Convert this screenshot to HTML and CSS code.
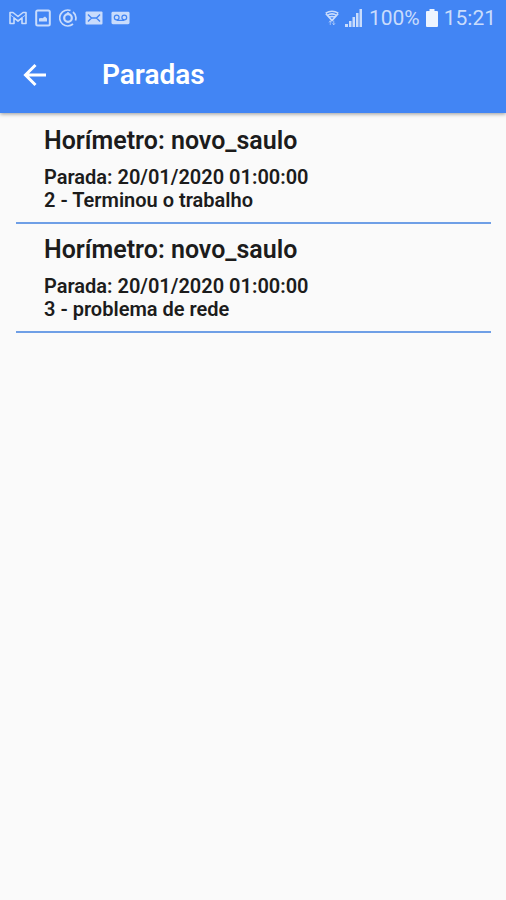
FILE: index.html
```html
<!DOCTYPE html>
<html lang="pt-BR">
<head>
<meta charset="utf-8">
<meta name="viewport" content="width=device-width, initial-scale=1">
<title>Paradas</title>
<link rel="stylesheet" href="styles.css">
</head>
<body>
<header class="header">
  <div class="status">
    <div class="status-group notifications">
      <svg width="18" height="16" viewBox="0 0 18 16" fill="none" stroke="currentColor" stroke-width="1.600" stroke-linejoin="round"><path d="M1 2.500h3l5 4 5-4h3v11h-4V8l-4 3.200L5 8v5.500H1z"/><path d="M1.500 5 9 10.500 16.500 5" stroke-width=".8"/></svg>
      <svg width="16" height="18" viewBox="0 0 16 18"><rect x="1.200" y="1.500" width="13.600" height="15" rx="1.500" fill="none" stroke="currentColor" stroke-width="2"/><path d="M4 12.500V9.500l2-.5 1.500.3L10 7.500l2 2v3z" fill="currentColor"/></svg>
      <svg width="18" height="18" viewBox="0 0 18 18" fill="none" stroke="currentColor"><path d="M11.500 1.500A8 8 0 1 0 14 15M14 3a8 8 0 0 1 2.500 8.500" stroke-width="1.700"/><circle cx="9" cy="9" r="3.800" stroke-width="2.200"/><path d="M9 3v3" stroke-width="1.500"/></svg>
      <svg width="18" height="14" viewBox="0 0 18 14"><rect x=".5" y=".5" width="17" height="13" rx="1" fill="currentColor"/><path d="M3 3.500 6.500 7H11.500L15 3.500M6.500 7 3 10.500M11.500 7 15 10.500" fill="none" stroke="#4285f4" stroke-width="1.400"/></svg>
      <svg width="19" height="14" viewBox="0 0 20 14"><rect x=".5" y=".5" width="19" height="13" rx="1.500" fill="currentColor"/><g fill="none" stroke="#4285f4" stroke-width="1.300"><circle cx="6" cy="6.500" r="2.500"/><circle cx="14" cy="6.500" r="2.500"/><path d="M6 9.500h8"/></g></svg>
    </div>
    <div class="status-group system">
      <svg width="14" height="18" viewBox="0 0 16 18" fill="none" stroke="currentColor" stroke-width="1.800"><path d="M.8 3.500q7.200-4.500 14.400 0M2.800 6q5.200-3.500 10.400 0M4.800 8.500q3.200-2.300 6.400 0M1 4l7 8 7-8"/><path d="M6 12v5M4.500 14 6 12.300 7.500 14M10 12v5M8.500 15 10 16.700 11.500 15" stroke-width="1" opacity=".75"/></svg>
      <svg width="18" height="18" viewBox="0 0 18 18" fill="currentColor"><path d="M0 15h3v3H0zM4 12h2.500v6H4zM7.500 8H10v10H7.500zM11 4h2.500v14H11zM14.500 0H17v18h-2.500z"/></svg>
      <span class="status-text">100%</span>
      <svg class="battery" width="12" height="18" viewBox="0 0 12 18" fill="currentColor"><path d="M3.500 0h5v2H11q1 0 1 1v14q0 1-1 1H1q-1 0-1-1V3q0-1 1-1h2.500z"/></svg>
      <span class="status-text">15:21</span>
    </div>
  </div>
  <div class="toolbar">
    <button class="back" type="button" aria-label="Voltar">
      <svg width="24" height="24" viewBox="0 0 24 24" fill="none" stroke="currentColor" stroke-width="3"><path d="M23 12H3M12.500 2 2.500 12l10 10"/></svg>
    </button>
    <h1 class="title">Paradas</h1>
  </div>
</header>
<main>
  <ul class="list">
    <li class="item">
      <h2 class="name">Horímetro: novo_saulo</h2>
      <p class="detail">Parada: 20/01/2020 01:00:00</p>
      <p class="detail">2 - Terminou o trabalho</p>
    </li>
    <li class="item">
      <h2 class="name">Horímetro: novo_saulo</h2>
      <p class="detail">Parada: 20/01/2020 01:00:00</p>
      <p class="detail">3 - problema de rede</p>
    </li>
  </ul>
</main>
</body>
</html>
```
FILE: styles.css
```css
* {
  box-sizing: border-box;
}

body {
  margin: 0;
  background: #fafafa;
  color: #1c1c1c;
  font-family: Roboto, "Liberation Sans", sans-serif;
}

.header {
  background: #4285f4;
  color: #fff;
  box-shadow: 0 1px 4px rgba(0, 0, 0, 0.4);
}

.status {
  display: flex;
  justify-content: space-between;
  align-items: center;
  height: 36px;
  padding: 0 10px 0 9px;
  color: #c9dcfc;
}

.status-group {
  display: flex;
  align-items: center;
}

.notifications {
  gap: 8px;
}

.system {
  gap: 6px;
}

.status-text {
  font-size: 21px;
  line-height: 36px;
}

.battery {
  color: #edf4ff;
}

.toolbar {
  display: flex;
  align-items: center;
  height: 77px;
  padding: 0 23px;
  gap: 55px;
}

.back {
  display: flex;
  padding: 0;
  border: 0;
  background: none;
  color: inherit;
}

.title {
  margin: 0;
  font-size: 28px;
  font-weight: 600;
  line-height: 37px;
}

.list {
  margin: 0;
  padding: 2px 15px 0 16px;
  list-style: none;
}

.item {
  padding: 10px 28px;
  border-bottom: 2px solid #6f9fe6;
}

.name {
  margin: 0 0 9px;
  font-size: 25px;
  font-weight: 600;
  line-height: 32px;
}

.detail {
  margin: 0;
  font-size: 20px;
  font-weight: 600;
  line-height: 23px;
}
```
